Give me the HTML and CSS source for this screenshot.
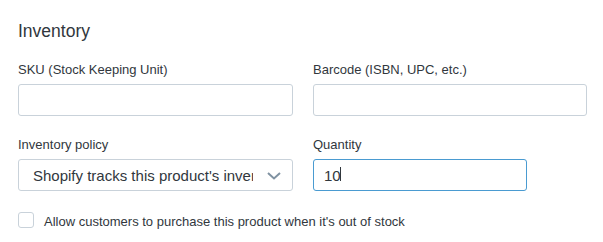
FILE: index.html
```html
<!DOCTYPE html>
<html lang="en">
<head>
  <meta charset="UTF-8" />
  <meta name="viewport" content="width=device-width, initial-scale=1.0" />
  <title>Inventory</title>
  <link rel="stylesheet" href="styles.css">
</head>
<body>
  <div class="card">
    <h2 class="card-title">Inventory</h2>
    <div class="form-grid">
      <div class="field">
        <label class="field-label" for="sku">SKU (Stock Keeping Unit)</label>
        <input class="text-input" id="sku" type="text" />
      </div>
      <div class="field">
        <label class="field-label" for="barcode">Barcode (ISBN, UPC, etc.)</label>
        <input class="text-input" id="barcode" type="text" />
      </div>
      <div class="field">
        <label class="field-label" for="policy">Inventory policy</label>
        <div class="select-wrap">
          <select class="select-input" id="policy">
            <option>Shopify tracks this product's inventory</option>
            <option>Don't track inventory</option>
          </select>
          <svg class="select-arrow" width="14" height="8" viewBox="0 0 14 8">
            <polyline points="1,1 7,6.5 13,1" fill="none" stroke="#8092a2" stroke-width="2" />
          </svg>
        </div>
      </div>
      <div class="field">
        <label class="field-label" for="quantity">Quantity</label>
        <div class="qty-wrap">
          <input class="text-input qty-input is-focused" id="quantity" type="text" value="10" />
          <span class="caret"></span>
        </div>
      </div>
    </div>
    <label class="checkbox-row">
      <input class="checkbox" type="checkbox" />
      <span class="checkbox-text">Allow customers to purchase this product when it's out of stock</span>
    </label>
  </div>
</body>
</html>
```

FILE: styles.css
```css
body {
  margin: 0;
  background: #fff;
  color: #31373d;
  font-family: 'Liberation Sans', Arial, sans-serif;
}
.card {
  padding: 20px 16px 0 18px;
}
.card-title {
  margin: 0 0 20px;
  font-size: 17.5px;
  font-weight: normal;
  line-height: 22px;
}
.form-grid {
  display: grid;
  grid-template-columns: 275px 274px;
  column-gap: 20px;
  row-gap: 21px;
}
.field-label {
  display: block;
  font-size: 13px;
  line-height: 16px;
  margin-bottom: 6px;
}
.text-input,
.select-input {
  box-sizing: border-box;
  width: 100%;
  height: 32px;
  margin: 0;
  border: 1px solid #c9d2da;
  border-radius: 3px;
  background: #fff;
  color: #31373d;
  font-family: 'Liberation Sans', Arial, sans-serif;
  font-size: 15px;
  outline: none;
}
.text-input {
  padding: 0 10px;
}
.select-wrap,
.qty-wrap {
  position: relative;
}
.select-input {
  appearance: none;
  -webkit-appearance: none;
  padding: 0 39px 0 14px;
}
.select-arrow {
  position: absolute;
  top: 13px;
  right: 12px;
}
.qty-input {
  width: 214px;
}
.is-focused {
  border-color: #4a9bd1;
}
.caret {
  position: absolute;
  left: 27px;
  top: 8px;
  width: 1px;
  height: 14px;
  background: #31373d;
}
.checkbox-row {
  display: flex;
  align-items: flex-start;
  gap: 10px;
  margin-top: 21px;
  font-size: 13px;
  line-height: 16px;
}
.checkbox {
  appearance: none;
  -webkit-appearance: none;
  box-sizing: border-box;
  width: 16px;
  height: 16px;
  margin: 0;
  border: 1px solid #c9d2da;
  border-radius: 3px;
  background: #fff;
}
.checkbox-text {
  padding-top: 2px;
}
```
